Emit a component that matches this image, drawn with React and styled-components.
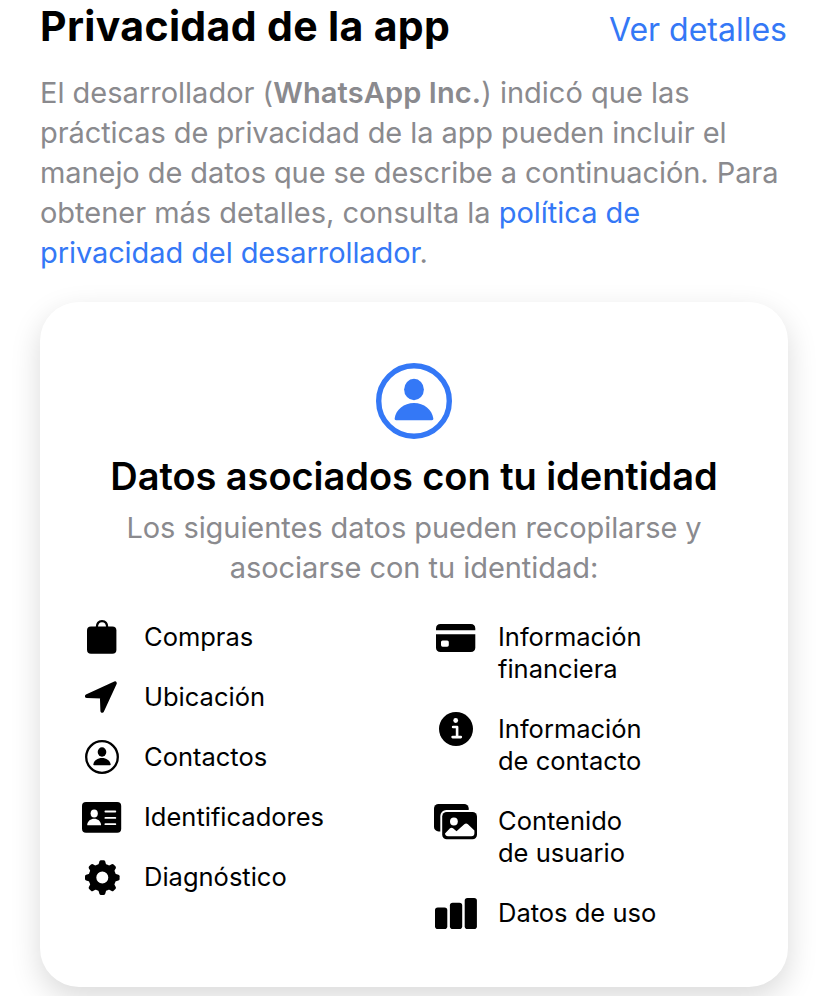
import React from "react";
import styled, { createGlobalStyle } from "styled-components";

const GlobalStyle = createGlobalStyle`
  body {
    margin: 0;
    background-color: #ffffff;
    font-family: Inter, "Liberation Sans", sans-serif;
    overflow: hidden;
  }
`;

const Page = styled.main`
  box-sizing: border-box;
  width: 828px;
  height: 996px;
  padding: 0 40px;
  overflow: hidden;
`;

const Header = styled.header`
  display: flex;
  justify-content: space-between;
  align-items: baseline;
  height: 73px;
  padding-right: 1px;
`;

const Title = styled.h1`
  margin: 0;
  padding-top: 2px;
  color: #000000;
  font-size: 41px;
  font-weight: 700;
  line-height: 48px;
  letter-spacing: 0.35px;
`;

const DetailsLink = styled.a`
  color: #3478f6;
  font-size: 32px;
`;

const Intro = styled.p`
  margin: 0;
  color: #8a8a8e;
  font-size: 29px;
  line-height: 40px;
`;

const Line = styled.span`
  display: block;
  white-space: nowrap;
  letter-spacing: ${(props) => props.$spacing || 0}px;
`;

const Developer = styled.strong`
  font-weight: 600;
  letter-spacing: 0.12px;
`;

const PolicyLink = styled.a`
  color: #3478f6;
`;

const Card = styled.section`
  box-sizing: border-box;
  display: flex;
  flex-direction: column;
  align-items: center;
  height: 685px;
  margin-top: 29px;
  padding-top: 61px;
  border-radius: 39px;
  background-color: #ffffff;
  box-shadow: 0 11px 30px rgba(0, 0, 0, 0.15);
`;

const CardTitle = styled.h2`
  margin: 13px 0 0;
  color: #000000;
  font-size: 38px;
  font-weight: 600;
  line-height: 48px;
  white-space: nowrap;
  letter-spacing: -0.06px;
`;

const CardText = styled.p`
  margin: 8px 0 0;
  color: #8a8a8e;
  font-size: 29px;
  line-height: 40px;
  text-align: center;
`;

const Columns = styled.div`
  display: grid;
  grid-template-columns: 354px 354px;
  align-self: stretch;
  margin-top: 33px;
  padding-left: 40px;
`;

const List = styled.ul`
  display: flex;
  flex-direction: column;
  gap: 28px;
  margin: 0;
  padding: 0;
  list-style: none;
`;

const Item = styled.li`
  display: flex;
  align-items: flex-start;
  gap: 20px;
  color: #000000;
  font-size: 25.5px;
  line-height: 32px;
`;

const ItemIcon = styled.svg`
  flex: none;
  width: 44px;
  height: 40px;
  margin: -4px 0;
`;

const teeth = [0, 45, 90, 135, 180, 225, 270, 315];

const IdentityIcon = () => (
  <svg width="76" height="76" viewBox="0 0 76 76" fill="#3478f6">
    <circle cx="38" cy="38" r="35.3" fill="none" stroke="#3478f6" strokeWidth="5.4" />
    <ellipse cx="38" cy="26.5" rx="9.9" ry="10.7" />
    <path d="M20.2 57.2c-1.2 0-1.7-.7-1.5-1.9C19.8 46.600 28 40 38 40s18.200 6.600 19.300 15.300c.2 1.200-.3 1.900-1.500 1.900z" />
  </svg>
);

const BagIcon = () => (
  <ItemIcon viewBox="0 0 44 40">
    <rect x="7" y="9.5" width="29.4" height="27.3" rx="4" />
    <path d="M16.8 10.500c0-4 2-6.400 5.200-6.400s5.200 2.400 5.200 6.400" fill="none" stroke="#000" strokeWidth="2.3" />
  </ItemIcon>
);

const ArrowIcon = () => (
  <ItemIcon viewBox="0 0 44 40">
    <path d="M35 6.200 22.200 34 21.700 19.700 6.700 19.200z" fill="#000" stroke="#000" strokeWidth="3.6" strokeLinejoin="round" />
  </ItemIcon>
);

const ContactIcon = () => (
  <ItemIcon viewBox="0 0 44 40">
    <circle cx="22" cy="20" r="15.8" fill="none" stroke="#000" strokeWidth="2.3" />
    <ellipse cx="22" cy="15" rx="4.3" ry="4.7" />
    <path d="M14.100 28.300c-.6 0-.9-.3-.8-.9.6-3.700 4.200-6.400 8.700-6.400s8.100 2.700 8.700 6.400c.1.6-.2.900-.8.900z" />
  </ItemIcon>
);

const IdCardIcon = () => (
  <ItemIcon viewBox="0 0 44 40">
    <rect x="2" y="5" width="39.2" height="30.8" rx="4" />
    <g fill="#fff">
      <ellipse cx="14.2" cy="16.5" rx="3.6" ry="3.9" />
      <path d="M8 28.300c-.6 0-.9-.3-.8-.9.500-3.400 3.400-5.700 7-5.700s6.400 2.300 6.900 5.700c.1.6-.2.900-.8.900z" />
      <rect x="24.5" y="13.6" width="11.7" height="1.9" rx=".9" />
      <rect x="24.5" y="19.9" width="11.7" height="1.9" rx=".9" />
      <rect x="24.5" y="26.2" width="11.7" height="1.9" rx=".9" />
    </g>
  </ItemIcon>
);

const GearIcon = () => (
  <ItemIcon viewBox="0 0 44 40">
    <circle cx="22.3" cy="20.6" r="9.9" fill="none" stroke="#000" strokeWidth="7.8" />
    {teeth.map((angle) => (
      <path
        key={angle}
        d="M18.200 8.500l1.200-4q.4-1.200 1.600-1.200h2.600q1.200 0 1.600 1.200l1.200 4z"
        transform={`rotate(${angle} 22.3 20.6)`}
      />
    ))}
  </ItemIcon>
);

const CreditCardIcon = () => (
  <ItemIcon viewBox="0 0 44 40">
    <path d="M2 13.200v-1.700C2 8.600 3.600 7 6.500 7h30.300c2.900 0 4.500 1.600 4.500 4.500v1.700z" />
    <path d="M2 17.200h39.300v13.300c0 2.900-1.600 4.500-4.500 4.500H6.500C3.600 35 2 33.400 2 30.500z" />
    <rect x="7" y="23.4" width="7.8" height="6.3" rx="1.6" fill="#fff" />
  </ItemIcon>
);

const InfoIcon = () => (
  <ItemIcon viewBox="0 0 44 40">
    <circle cx="22" cy="20" r="17" />
    <circle cx="21.7" cy="11.5" r="2.4" fill="#fff" />
    <path d="M19.100 18h4v9.900M18.600 28.100h8.200" fill="none" stroke="#fff" strokeWidth="2.6" strokeLinecap="round" strokeLinejoin="round" />
  </ItemIcon>
);

const PhotosIcon = () => (
  <ItemIcon viewBox="0 0 44 40">
    <rect x="0" y="3" width="34.7" height="27.4" rx="4.5" />
    <rect x="6.3" y="9" width="38.5" height="31" rx="6" fill="#fff" />
    <rect x="8.2" y="10.9" width="34.8" height="27.3" rx="4.5" />
    <circle cx="19.9" cy="20.5" r="3.9" fill="#fff" />
    <path
      d="M11 32.600l5-5.300q1.500-1.300 3 0l3.500 3 7.800-7q1.800-1.500 3.600 0l6.500 6.200v2.800q0 3-3 3H14q-2.700 0-3-2.700z"
      fill="#fff"
    />
  </ItemIcon>
);

const BarsIcon = () => (
  <ItemIcon viewBox="0 0 44 40">
    <rect x="1" y="14.5" width="12.3" height="21.5" rx="2.8" />
    <rect x="15.9" y="9.7" width="12.3" height="26.3" rx="2.8" />
    <rect x="30.7" y="4.9" width="12.2" height="31.1" rx="2.8" />
  </ItemIcon>
);

const leftItems = [
  { icon: BagIcon, lines: ["Compras"] },
  { icon: ArrowIcon, lines: ["Ubicación"] },
  { icon: ContactIcon, lines: ["Contactos"] },
  { icon: IdCardIcon, lines: ["Identificadores"] },
  { icon: GearIcon, lines: ["Diagnóstico"] },
];

const rightItems = [
  { icon: CreditCardIcon, lines: ["Información", "financiera"] },
  { icon: InfoIcon, lines: ["Información", "de contacto"] },
  { icon: PhotosIcon, lines: ["Contenido", "de usuario"] },
  { icon: BarsIcon, lines: ["Datos de uso"] },
];

const DataList = ({ items }) => (
  <List>
    {items.map(({ icon: Icon, lines }, key) => (
      <Item key={key}>
        <Icon />
        <div>
          {lines.map((line) => (
            <Line key={line}>{line}</Line>
          ))}
        </div>
      </Item>
    ))}
  </List>
);

const App = () => {
  return (
    <>
      <GlobalStyle />
      <Page>
        <Header>
          <Title>Privacidad de la app</Title>
          <DetailsLink>Ver detalles</DetailsLink>
        </Header>
        <Intro>
          <Line>
            El desarrollador (<Developer>WhatsApp Inc.</Developer>) indicó que las
          </Line>
          <Line $spacing={-0.08}>prácticas de privacidad de la app pueden incluir el</Line>
          <Line $spacing={-0.08}>manejo de datos que se describe a continuación. Para</Line>
          <Line $spacing={-0.02}>
            obtener más detalles, consulta la <PolicyLink>política de</PolicyLink>
          </Line>
          <Line $spacing={-0.09}>
            <PolicyLink>privacidad del desarrollador</PolicyLink>.
          </Line>
        </Intro>
        <Card>
          <IdentityIcon />
          <CardTitle>Datos asociados con tu identidad</CardTitle>
          <CardText>
            <Line $spacing={-0.07}>Los siguientes datos pueden recopilarse y</Line>
            <Line $spacing={-0.04}>asociarse con tu identidad:</Line>
          </CardText>
          <Columns>
            <DataList items={leftItems} />
            <DataList items={rightItems} />
          </Columns>
        </Card>
      </Page>
    </>
  );
};

export default App;
